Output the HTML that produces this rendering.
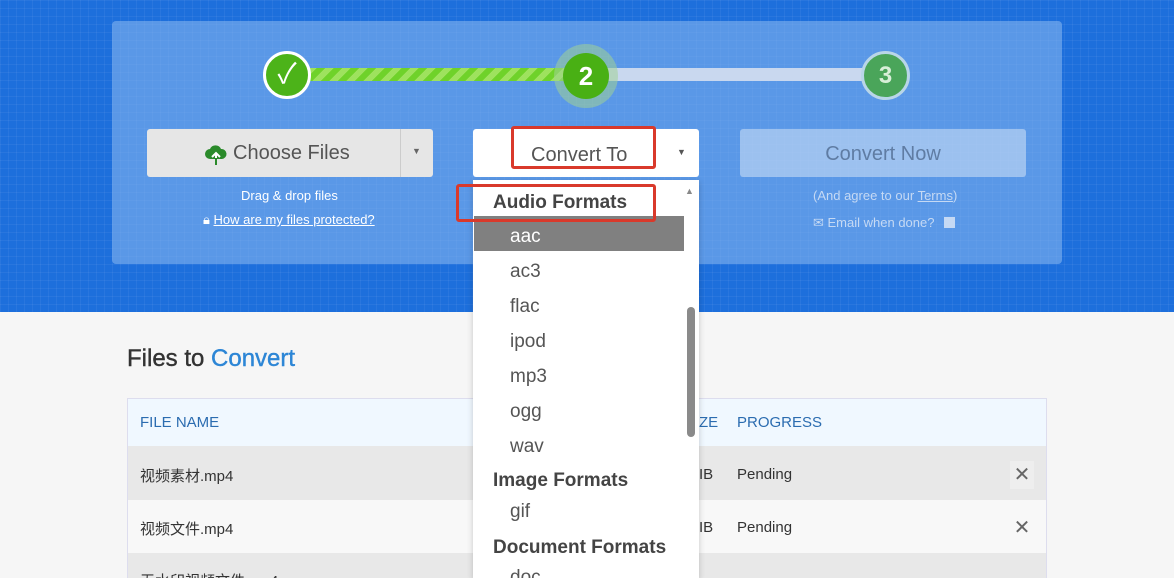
<!DOCTYPE html>
<html><head><meta charset="utf-8"><style>
*{box-sizing:border-box;margin:0;padding:0}
html{width:1174px;height:578px;overflow:hidden}
body{width:1174px;height:578px;overflow:hidden;position:relative;background:#f6f6f6;font-family:"Liberation Sans","Noto Sans CJK SC",sans-serif}
.abs{position:absolute}
.blue{left:0;top:0;width:1174px;height:312px;background:#1d6fdc;background-image:linear-gradient(rgba(255,255,255,.05) 1px,transparent 1px),linear-gradient(90deg,rgba(255,255,255,.05) 1px,transparent 1px);background-size:8px 8px}
.panel{left:112px;top:21px;width:950px;height:243px;background:rgba(140,185,240,.55);border-radius:4px}
.t{font-size:13px;color:#fff}
</style></head><body>
<div class="abs blue"></div>
<div class="abs panel"></div>
<div class="abs" style="left:300px;top:68px;width:270px;height:13px;background:repeating-linear-gradient(135deg,#6fd22a 0 6px,#9ee25e 6px 12px)"></div>
<div class="abs" style="left:600px;top:68px;width:280px;height:13px;background:#c9d8ef"></div>
<div class="abs" style="left:263px;top:51px;width:48px;height:48px;border-radius:50%;background:#4cb319;border:3px solid #fff;color:#fff;font-size:28px;text-align:center;line-height:40px">✓</div>
<div class="abs" style="left:554px;top:44px;width:64px;height:64px;border-radius:50%;background:rgba(160,210,150,.55)"></div>
<div class="abs" style="left:563px;top:53px;width:46px;height:46px;border-radius:50%;background:#49b014;color:#fff;font-size:26px;font-weight:bold;text-align:center;line-height:46px">2</div>
<div class="abs" style="left:861px;top:51px;width:49px;height:49px;border-radius:50%;background:#4aa55a;border:3px solid #b9d6e8;color:#d8efd8;font-size:24px;font-weight:bold;text-align:center;line-height:43px">3</div>
<div class="abs" style="left:147px;top:129px;width:286px;height:48px;background:#e6e6e6;border-radius:3px"></div>
<div class="abs" style="left:400px;top:129px;width:1px;height:48px;background:#ccc"></div>
<svg class="abs" style="left:204px;top:144px" width="24" height="22" viewBox="0 0 24 22"><path d="M6 15a5 5 0 0 1 0-10 6 6 0 0 1 11 0 5 5 0 0 1 1 10z" fill="#2a8a2a"/><path d="M12 21V10M8 13l4-4 4 4" stroke="#fff" stroke-width="2" fill="none"/><path d="M12 21V14" stroke="#2a8a2a" stroke-width="2"/></svg>
<div class="abs" style="left:233px;top:142px;font-size:20px;color:#555">Choose Files</div>
<div class="abs" style="left:412px;top:146px;font-size:9px;color:#666">▼</div>
<div class="abs t" style="left:241px;top:188px">Drag &amp; drop files</div>
<div class="abs t" style="left:203px;top:212px">🔒︎ <u>How are my files protected?</u></div>
<div class="abs" style="left:473px;top:129px;width:226px;height:48px;background:#fff;border-radius:3px"></div>
<div class="abs" style="left:531px;top:144px;font-size:20px;color:#555">Convert To</div>
<div class="abs" style="left:677px;top:147px;font-size:9px;color:#555">▼</div>
<div class="abs" style="left:740px;top:129px;width:286px;height:48px;background:rgba(200,220,245,.6);border-radius:3px;color:#5f7ca3;font-size:20px;text-align:center;line-height:50px">Convert Now</div>
<div class="abs" style="left:813px;top:188px;font-size:13px;color:#c5d9f4">(And agree to our <u>Terms</u>)</div>
<div class="abs" style="left:813px;top:215px;font-size:13px;color:#c5d9f4">✉ Email when done? <span style="display:inline-block;width:11px;height:11px;background:#c5d9f4;vertical-align:-1px;margin-left:6px"></span></div>
<div class="abs" style="left:127px;top:345px;font-size:24px;color:#333;-webkit-text-stroke:0.4px #333">Files to <span style="color:#2d86d6;-webkit-text-stroke:0.4px #2d86d6">Convert</span></div>
<div class="abs" style="left:127px;top:398px;width:920px;height:180px;border:1px solid #dde"></div>
<div class="abs" style="left:128px;top:399px;width:918px;height:47px;background:#f0f8ff"></div>
<div class="abs" style="left:128px;top:446px;width:918px;height:54px;background:#e8e8e8"></div>
<div class="abs" style="left:128px;top:500px;width:918px;height:53px;background:#f8f8f8"></div>
<div class="abs" style="left:128px;top:553px;width:918px;height:25px;background:#e8e8e8"></div>
<div class="abs" style="left:140px;top:414px;font-size:15px;color:#2b6cb0">FILE NAME</div>
<div class="abs" style="left:699px;top:414px;font-size:15px;color:#2b6cb0">ZE</div>
<div class="abs" style="left:737px;top:414px;font-size:15px;color:#2b6cb0">PROGRESS</div>
<div class="abs" style="left:140px;top:465px;font-size:15px;color:#333">视频素材.mp4</div>
<div class="abs" style="left:140px;top:518px;font-size:15px;color:#333">视频文件.mp4</div>
<div class="abs" style="left:140px;top:570px;font-size:15px;color:#333">无水印视频文件.mp4</div>
<div class="abs" style="left:699px;top:466px;font-size:15px;color:#333">IB</div>
<div class="abs" style="left:699px;top:519px;font-size:15px;color:#333">IB</div>
<div class="abs" style="left:737px;top:466px;font-size:15px;color:#333">Pending</div>
<div class="abs" style="left:737px;top:519px;font-size:15px;color:#333">Pending</div>
<div class="abs" style="left:1010px;top:461px;width:24px;height:28px;background:#eee;color:#666;font-size:20px;text-align:center;line-height:28px">✕</div>
<div class="abs" style="left:1010px;top:514px;width:24px;height:28px;color:#666;font-size:20px;text-align:center;line-height:28px">✕</div>
<div class="abs" style="left:473px;top:180px;width:226px;height:398px;background:#fff;box-shadow:0 2px 6px rgba(0,0,0,.2)"></div>
<div class="abs" style="left:685px;top:186px;font-size:9px;color:#888">▲</div>
<div class="abs" style="left:687px;top:307px;width:8px;height:130px;background:#8a8a8a;border-radius:4px"></div>
<div class="abs" style="left:474px;top:216px;width:210px;height:35px;background:#808080"></div>
<div class="abs" style="left:493px;top:192px;font-size:19px;font-weight:bold;color:#444">Audio Formats</div>
<div style="position:absolute;left:510px;top:219px;font-size:19px;color:#555;line-height:35px">
<div style="color:#fff">aac</div><div>ac3</div><div>flac</div><div>ipod</div><div>mp3</div><div>ogg</div><div>wav</div></div>
<div class="abs" style="left:493px;top:470px;font-size:19px;font-weight:bold;color:#444">Image Formats</div>
<div class="abs" style="left:510px;top:501px;font-size:19px;color:#555">gif</div>
<div class="abs" style="left:493px;top:537px;font-size:19px;font-weight:bold;color:#444">Document Formats</div>
<div class="abs" style="left:510px;top:567px;font-size:19px;color:#555">doc</div>
<div class="abs" style="left:511px;top:126px;width:145px;height:43px;border:3px solid #d9392b;border-radius:3px"></div>
<div class="abs" style="left:456px;top:184px;width:200px;height:38px;border:3px solid #d9392b;border-radius:3px"></div>
</body></html>
